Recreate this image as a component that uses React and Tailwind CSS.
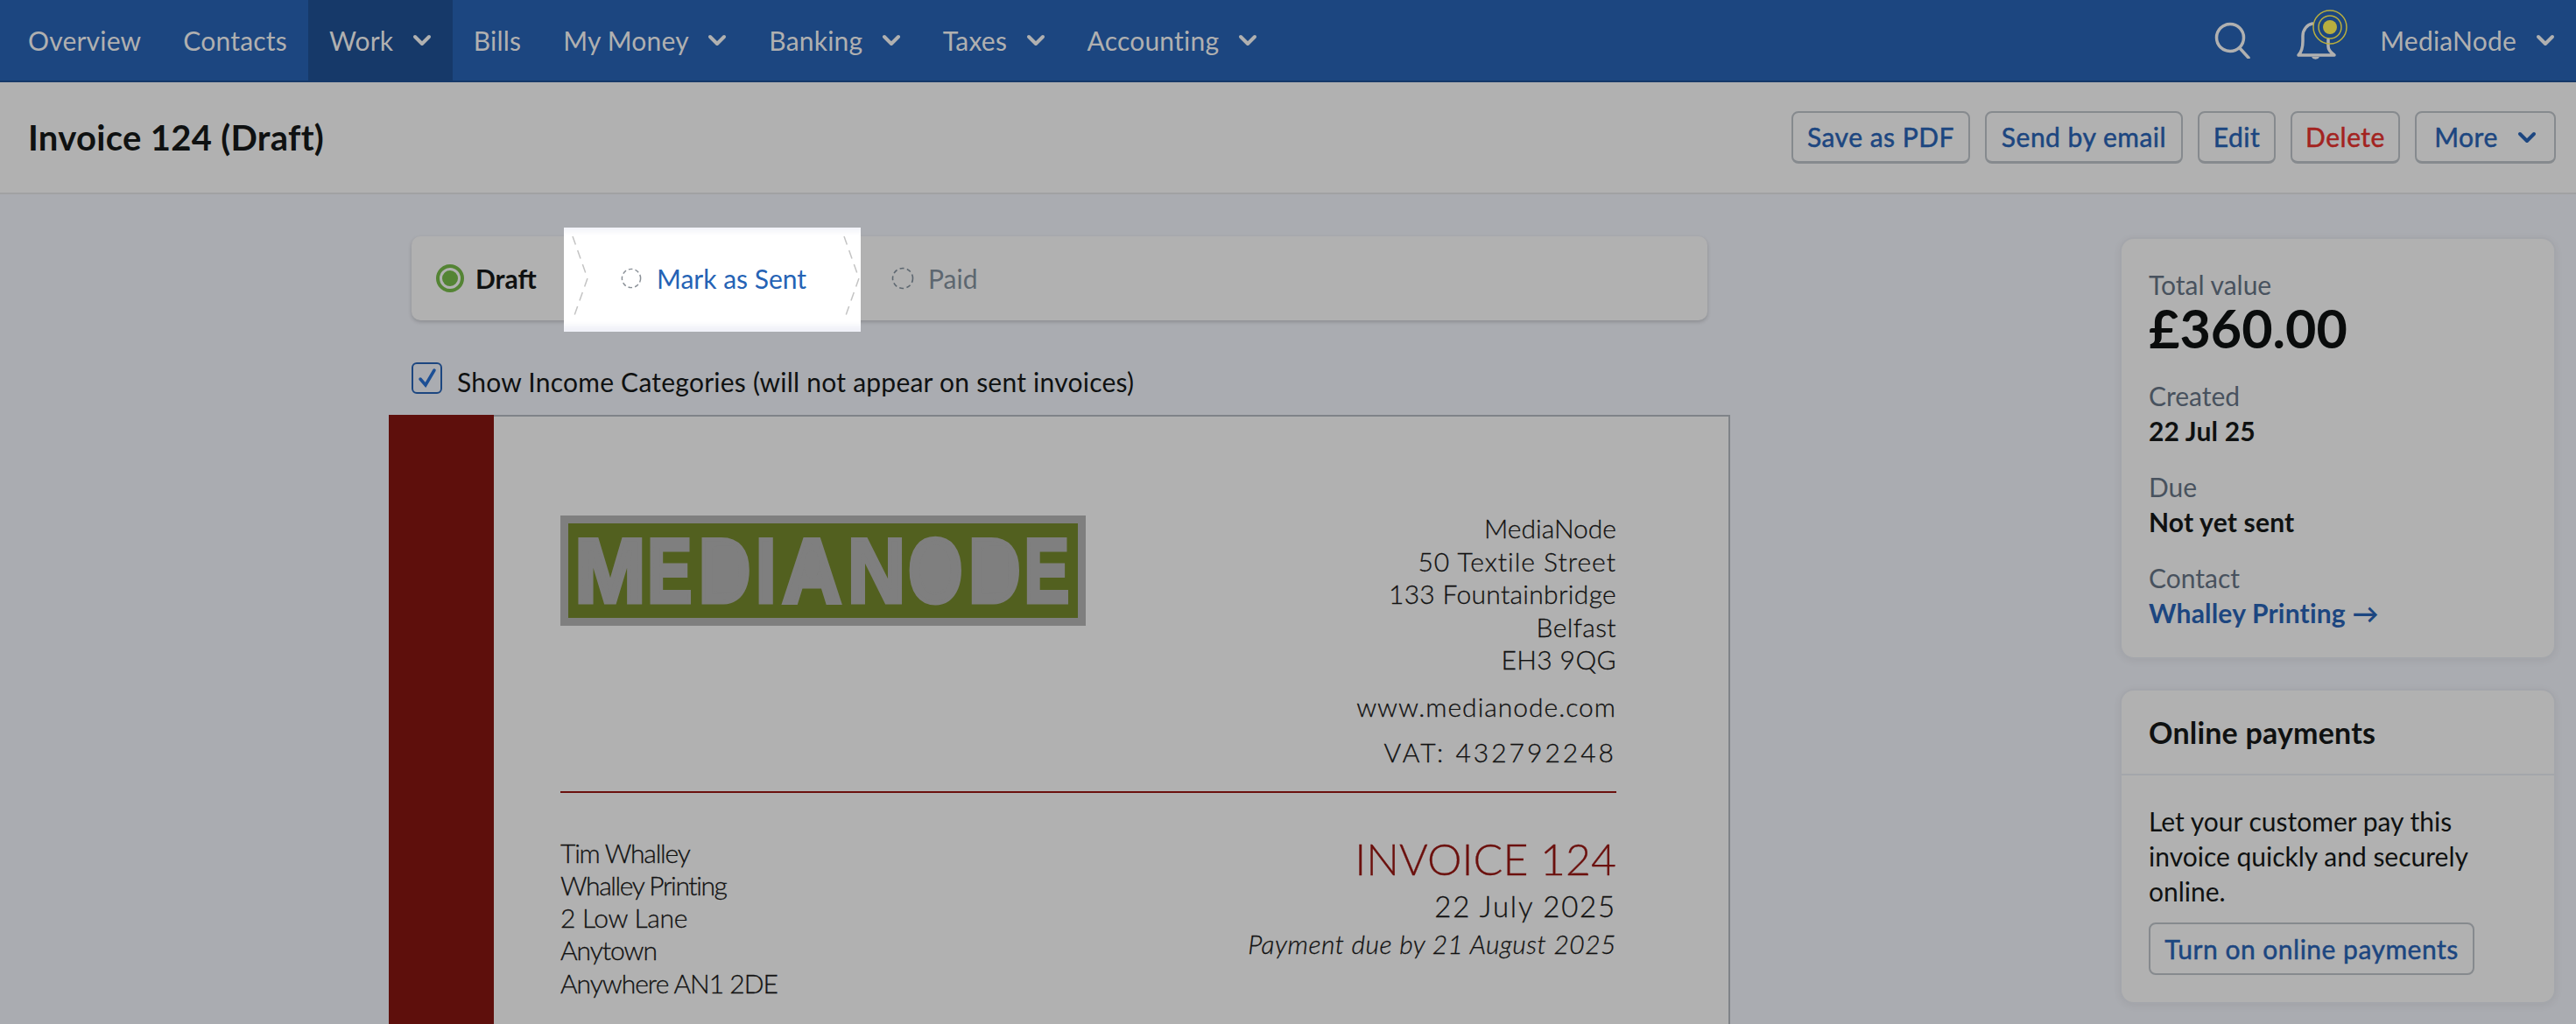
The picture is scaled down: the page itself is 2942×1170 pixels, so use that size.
import { useState } from 'react';

const sans = "font-['Lato','Noto_Sans',sans-serif]";

function Chevron({ className }) {
  return (
    <svg viewBox="0 0 22 14" className={className} fill="none" stroke="currentColor" strokeWidth="4" strokeLinecap="round" strokeLinejoin="round">
      <path d="M3 3l8 8 8-8" />
    </svg>
  );
}

function NavItem({ label, chevron, active }) {
  return (
    <div className={`flex h-full items-center gap-[21.5px] px-6 ${active ? 'bg-[#163969]' : ''}`}>
      <span>{label}</span>
      {chevron && <Chevron className="h-[14px] w-[22px]" />}
    </div>
  );
}

function Button({ children, red, className = '' }) {
  return (
    <button className={`flex h-[60px] items-center justify-center rounded-[8px] border-2 border-b-[3px] border-[#868a8e] text-[30px] tracking-[0.5px] [-webkit-text-stroke:0.5px] ${red ? 'text-[#a3231f]' : 'text-[#1c4680]'} ${className}`}>
      {children}
    </button>
  );
}

function DashedCircle({ className }) {
  return (
    <svg viewBox="0 0 26 26" className={className} fill="none" stroke="currentColor" strokeWidth="1.6">
      <circle cx="13" cy="13" r="11.5" strokeDasharray="5 3.4" />
    </svg>
  );
}

function DashedArrow({ className }) {
  return (
    <svg viewBox="0 0 20 96" className={className} fill="none" stroke="#c4c4c4" strokeWidth="1.5" strokeDasharray="10 7">
      <path d="M1 0l17 48L1 96" />
    </svg>
  );
}

function Stat({ label, value, link, className = 'mt-[24px]' }) {
  return (
    <div className={className}>
      <div className="text-[30px] leading-[40px] text-[#48525e]">{label}</div>
      <div className={`text-[30px] font-bold leading-[40px] tracking-[0.2px] ${link ? 'text-[#1c4680]' : 'text-[#0f1111]'}`}>{value}</div>
    </div>
  );
}

// x and width of each letter in the logo, then side bearing and ink width of the font glyph
const logoLetters = [
  ['M', 6.5, 73.5, 0.07, 0.69], ['E', 89.8, 48.2, 0.073, 0.555], ['D', 150, 56, 0.073, 0.61],
  ['I', 216, 17, 0.07, 0.14], ['A', 241, 74, 0, 0.72], ['N', 323.5, 59, 0.07, 0.58],
  ['O', 390.7, 62, 0.04, 0.7], ['D', 464, 56, 0.073, 0.61], ['E', 528, 48.8, 0.073, 0.555],
];
const logoSize = 105;

function Logo() {
  return (
    <div className="mt-[4px] h-[126px] w-[600px] bg-[#7f7f7f] p-[9px]">
      <svg viewBox="0 0 582 110" className="h-[108px] w-[582px] overflow-visible bg-[#52601f]">
        {logoLetters.map(([ch, x, w, lsb, ink], i) => {
          const sx = (w - 5) / (ink * logoSize);
          const tx = x + 2.5 - lsb * logoSize * sx;
          return (
            <text key={i} transform={`translate(${tx} 91.5) scale(${sx} 1)`} fontFamily="Liberation Sans" fontWeight="700" fontSize={logoSize} fill="#7f7f7f" stroke="#7f7f7f" strokeWidth="5" strokeLinejoin="miter">{ch}</text>
          );
        })}
        <rect x="162" y="26" width="30" height="54" rx="8" fill="#7f7f7f" />
        <ellipse cx="421.7" cy="53" rx="18" ry="28" fill="#7f7f7f" />
        <rect x="476" y="26" width="30" height="54" rx="8" fill="#7f7f7f" />
        <ellipse cx="278" cy="48" rx="9" ry="16" fill="#7f7f7f" />
      </svg>
    </div>
  );
}

export default function App() {
  const [showCategories, setShowCategories] = useState(true);
  const invoiceFont = "font-['Lato',sans-serif] font-light [-webkit-text-stroke:0.3px]";

  return (
    <div className={`flex h-[1170px] w-full flex-col overflow-hidden bg-[#aaacb1] ${sans}`}>
      {/* top nav */}
      <nav className="flex h-[94px] shrink-0 items-center border-b-2 border-[#163969] bg-[#1c4680] pl-2 pr-[24px] text-[30px] tracking-[0.2px] text-[#b0b0b0]">
        <NavItem label="Overview" />
        <NavItem label="Contacts" />
        <NavItem label="Work" chevron active />
        <NavItem label="Bills" />
        <NavItem label="My Money" chevron />
        <NavItem label="Banking" chevron />
        <NavItem label="Taxes" chevron />
        <NavItem label="Accounting" chevron />
        <div className="ml-auto flex items-center">
          <svg viewBox="0 0 42 42" className="h-[42px] w-[42px]" fill="none" stroke="currentColor" strokeWidth="3.5" strokeLinecap="round">
            <circle cx="18" cy="18" r="15.5" />
            <path d="M29 30l10 11" />
          </svg>
          <svg viewBox="0 0 64 64" className="ml-[46px] -mt-[14px] h-[64px] w-[64px]" fill="none">
            <path d="M8 56c4-4 5-8 5-16v-6c0-7 5-13 11-14M42 38v8c0 4 3 7 7 10M8 56h41" stroke="currentColor" strokeWidth="3.5" strokeLinecap="round" />
            <path d="M23 58a5 5 0 0 0 9 0z" fill="currentColor" />
            <circle cx="44" cy="24" r="8" fill="#b9ae3e" />
            <circle cx="44" cy="24" r="13" stroke="#b9ae3e" strokeWidth="1.5" />
            <circle cx="44" cy="24" r="19" stroke="#b9ae3e" strokeWidth="1.5" />
          </svg>
          <span className="ml-[37px]">MediaNode</span>
          <Chevron className="ml-[22px] h-[14px] w-[22px]" />
        </div>
      </nav>

      {/* page title */}
      <header className="flex h-[128px] shrink-0 items-center justify-between border-b-2 border-[#a1a2a3] bg-[#b1b1b1] pl-[32px] pr-[23px]">
        <h1 className="text-[40px] font-bold tracking-[0.3px] text-[#0f1111]">Invoice 124 (Draft)</h1>
        <div className="flex gap-[17px]">
          <Button className="w-[204px]">Save as PDF</Button>
          <Button className="w-[226px]">Send by email</Button>
          <Button className="w-[89px]">Edit</Button>
          <Button red className="w-[125px]">Delete</Button>
          <Button className="w-[161px] gap-[22px]">More <Chevron className="h-[14px] w-[22px]" /></Button>
        </div>
      </header>

      <main className="flex flex-1 pt-[48px]">
        <div className="ml-[470px] flex w-[1480px] flex-col">
          {/* status steps */}
          <div className="flex h-[96px] items-center rounded-[10px] bg-[#b1b1b1] pl-[28px] shadow-[0_2px_4px_rgba(0,0,0,0.18)]">
            <div className="flex w-[146px] items-center gap-[13px] text-[30px] font-bold text-[#0f1111]">
              <span className="flex h-[32px] w-[32px] items-center justify-center rounded-full border-[4px] border-[#548434]">
                <span className="h-[18px] w-[18px] rounded-full bg-[#548434]" />
              </span>
              Draft
            </div>
            <div className="relative flex h-full w-[339px] items-center">
              <div className="absolute inset-x-0 -top-[10px] -bottom-[13px] bg-white shadow-[inset_0_10px_6px_-6px_rgba(170,180,215,0.18),inset_0_-13px_6px_-6px_rgba(170,180,215,0.18)]" />
              <DashedArrow className="absolute left-[9px] top-0 h-[96px] w-[20px]" />
              <DashedArrow className="absolute left-[319px] top-0 h-[96px] w-[20px]" />
              <div className="relative ml-[65px] flex items-center gap-[17px] text-[30px] text-[#2563b5]">
                <DashedCircle className="h-[24px] w-[24px] text-[#8a9097]" />
                Mark as Sent
              </div>
            </div>
            <div className="ml-[35px] flex items-center gap-[16px] text-[30px] text-[#5d6770]">
              <DashedCircle className="h-[26px] w-[26px]" />
              Paid
            </div>
          </div>

          <label className="mt-[48px] flex h-[35px] items-center gap-[17px] text-[30px] tracking-[0.23px] text-[#0f1111]">
            <span className="flex h-[36px] w-[35px] items-center justify-center rounded-[6px] border-2 border-[#1c4680]" onClick={() => setShowCategories(!showCategories)}>
              {showCategories && (
                <svg viewBox="0 0 24 24" className="h-[24px] w-[24px]" fill="none" stroke="#1c4f95" strokeWidth="3.5" strokeLinecap="round">
                  <path d="M4 13l6 7L20 3" />
                </svg>
              )}
            </span>
            <span className="mt-[10px]">Show Income Categories (will not appear on sent invoices)</span>
          </label>

          {/* invoice paper */}
          <div className="-mx-[26px] mt-[25px] flex flex-1 border-r-2 border-t-2 border-[#7f8388] bg-[#b1b1b1]">
            <div className="-mt-[2px] w-[120px] bg-[#5e0f0c]" />
            <div className={`flex-1 pl-[76px] pr-[128px] pt-[109px] text-[30px] text-[#111] ${invoiceFont}`}>
              <div className="flex items-start justify-between">
                <Logo />
                <div className="text-right leading-[37.5px]">
                  <div>MediaNode</div>
                  <div className="tracking-[1px]">50 Textile Street</div>
                  <div className="tracking-[0.3px]">133 Fountainbridge</div>
                  <div className="tracking-[0.4px]">Belfast</div>
                  <div className="tracking-[0.4px]">EH3 9QG</div>
                  <div className="mt-[16px] tracking-[1px]">www.medianode.com</div>
                  <div className="mt-[15px] tracking-[3px]">VAT: 432792248</div>
                </div>
              </div>
              <div className="mt-[25px] h-[2px] bg-[#6b100d]" />
              <div className="flex items-start justify-between">
                <div className="mt-[50px] leading-[37.3px]">
                  <div className="tracking-[-1.2px]">Tim Whalley</div>
                  <div className="tracking-[-1.4px]">Whalley Printing</div>
                  <div className="tracking-[-0.3px]">2 Low Lane</div>
                  <div className="tracking-[-1px]">Anytown</div>
                  <div className="tracking-[-1px]">Anywhere AN1 2DE</div>
                </div>
                <div className="mt-[45px] text-right">
                  <div className="text-[50px] leading-[60px] text-[#6b100d]">INVOICE 124</div>
                  <div className="mt-[4px] text-[33px] leading-[40px] tracking-[1.8px]">22 July 2025</div>
                  <div className="mt-[3px] italic leading-[40px] tracking-[0.5px]">Payment due by 21 August 2025</div>
                </div>
              </div>
            </div>
          </div>
        </div>

        {/* sidebar */}
        <aside className="ml-auto mr-[23px] flex w-[498px] flex-col gap-[34px] pt-px">
          <div className="h-[482px] rounded-[16px] border-2 border-[#a4a6ab] bg-[#b1b1b1] px-[31px] pt-[32px] shadow-[0_2px_10px_rgba(0,0,0,0.06)]">
            <div className="text-[30px] leading-[40px] text-[#48525e]">Total value</div>
            <div className="text-[61px] font-bold leading-[60px] text-[#0a0c0c]">£360.00</div>
            <Stat className="mt-[27px]" label="Created" value="22 Jul 25" />
            <Stat label="Due" value="Not yet sent" />
            <Stat label="Contact" value="Whalley Printing →" link />
          </div>
          <div className="h-[360px] rounded-[16px] border-2 border-[#a4a6ab] bg-[#b1b1b1] shadow-[0_2px_10px_rgba(0,0,0,0.06)]">
            <div className="flex h-[97px] items-center border-b-2 border-[#a4a6ab] px-[31px] text-[34px] font-bold tracking-[0.2px] text-[#0f1111]">Online payments</div>
            <div className="px-[31px] pt-[32px] text-[30px] leading-[40px] text-[#0f1111]">
              Let your customer pay this invoice quickly and securely online.
              <button className="mt-[16px] flex h-[60px] w-[372px] items-center justify-center rounded-[8px] border-2 border-[#868a8e] tracking-[0.5px] text-[#1c4680] [-webkit-text-stroke:0.5px]">Turn on online payments</button>
            </div>
          </div>
        </aside>
      </main>
    </div>
  );
}
